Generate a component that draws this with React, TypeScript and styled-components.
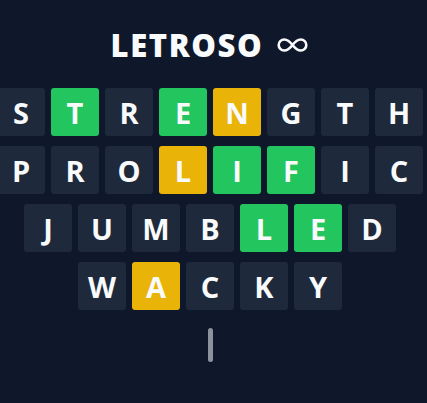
import React from 'react';
import styled, { createGlobalStyle } from 'styled-components';

type TileState = 'empty' | 'correct' | 'present';

const GlobalStyle = createGlobalStyle`
    html, body {
        margin: 0;
        padding: 0;
        background-color: #0f172a;
    }

    body {
        font-family: "Open Sans", "Noto Sans", sans-serif;
        overflow: hidden;
    }
`;

const Page = styled.div`
    display: flex;
    flex-direction: column;
    align-items: center;
    width: 427px;
    height: 403px;
    padding-right: 7px;
    box-sizing: border-box;
    background-color: #0f172a;
`;

const Header = styled.header`
    display: flex;
    align-items: center;
    gap: 13px;
    margin-top: 27px;
    height: 36px;
`;

const Title = styled.h1`
    margin: 0;
    font-size: 31px;
    font-weight: 800;
    line-height: 36px;
    letter-spacing: 1.6px;
    color: #f8fafc;
`;

const Board = styled.div`
    display: flex;
    flex-direction: column;
    align-items: center;
    row-gap: 10px;
    width: 100%;
    margin-top: 25px;
`;

const Row = styled.div`
    display: flex;
    justify-content: center;
    column-gap: 6px;
    width: 100%;
`;

const tileColors: Record<TileState, string> = {
    empty: '#1e293b',
    correct: '#22c55e',
    present: '#eab308',
};

const Tile = styled.div<{ $state: TileState }>`
    flex: 0 0 48px;
    display: flex;
    justify-content: center;
    align-items: center;
    width: 48px;
    height: 48px;
    border-radius: 3px;
    background-color: ${(props) => tileColors[props.$state]};
    font-size: 29px;
    font-weight: 700;
    color: #f8fafc;
`;

const Cursor = styled.div`
    width: 5px;
    height: 34px;
    margin-top: 18px;
    border-radius: 3px;
    background-color: #8d939e;
`;

const InfinityIcon = () => (
    <svg width="33" height="16" viewBox="0 0 33 16" fill="none">
        <path
            d="M16.5 8c-2.8-3.7-5.2-5.5-8.3-5.5a5.5 5.5 0 0 0 0 11c3.1 0 5.5-1.8 8.3-5.5s5.2-5.5 8.3-5.5a5.5 5.5 0 0 1 0 11c-3.1 0-5.5-1.8-8.3-5.5z"
            stroke="#f8fafc"
            strokeWidth="2.6"
            strokeLinecap="round"
            strokeLinejoin="round"
        />
    </svg>
);

// c = correct spot, p = present, anything else is an empty tile
const guesses: Array<[string, string]> = [
    ['STRENGTH', '.c.cp...'],
    ['PROLIFIC', '...pcc..'],
    ['JUMBLED', '....cc.'],
    ['WACKY', '.p...'],
];

const toState = (mark: string): TileState => {
    if (mark === 'c') return 'correct';
    if (mark === 'p') return 'present';
    return 'empty';
};

const App = () => (
    <>
        <GlobalStyle />
        <Page>
            <Header>
                <Title>LETROSO</Title>
                <InfinityIcon />
            </Header>
            <Board>
                {
                    guesses.map(([word, marks]) => (
                        <Row key={word}>
                            {
                                word.split('').map((letter, i) => (
                                    <Tile key={i} $state={toState(marks[i])}>{letter}</Tile>
                                ))
                            }
                        </Row>
                    ))
                }
            </Board>
            <Cursor />
        </Page>
    </>
);

export default App;
